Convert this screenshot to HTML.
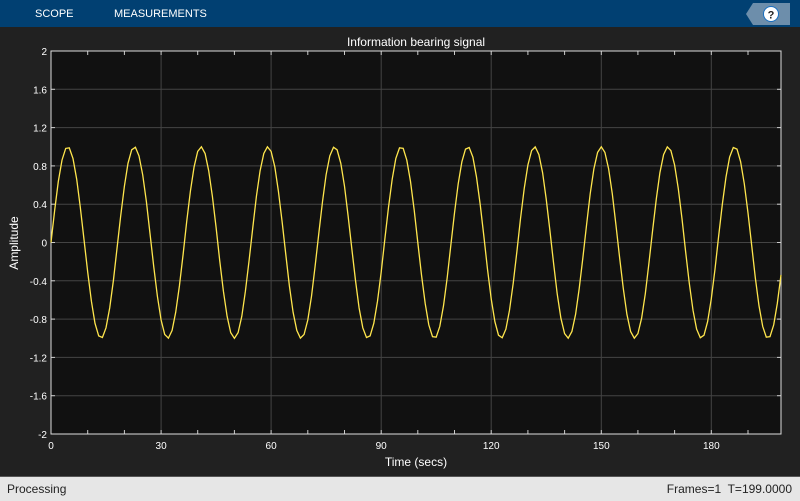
<!DOCTYPE html>
<html><head><meta charset="utf-8"><style>
*{margin:0;padding:0}
body{width:800px;height:500px;overflow:hidden;background:#212121;font-family:"Liberation Sans",Arial,sans-serif;position:relative}
#tb{position:absolute;left:0;top:0;width:800px;height:27px;background:#014072}
#tb span{position:absolute;top:8px;color:#fff;font-size:11px}
#st{position:absolute;left:0;top:476px;width:800px;height:24px;background:#e6e6e6;border-top:1px solid #555;font-size:12px;color:#222}
</style></head><body>
<div id="tb"><span style="left:35px">SCOPE</span><span style="left:114px">MEASUREMENTS</span>
<svg style="position:absolute;left:746px;top:3px" width="45" height="22"><polygon points="7,0 44,0 44,22 7,22 0,11" fill="#6d8eab"/><circle cx="25" cy="11" r="7.5" fill="#fff" stroke="#1a6fc0" stroke-width="1"/><text x="25" y="15.5" text-anchor="middle" font-size="11" font-weight="bold" fill="#222" font-family="Liberation Sans">?</text></svg>
</div>
<svg id="p" style="position:absolute;left:0;top:0" width="800" height="500"></svg>
<div id="st"><span style="position:absolute;left:7px;top:5px">Processing</span><span style="position:absolute;right:8px;top:5px">Frames=1&nbsp; T=199.0000</span></div>
<script>
var s='',L=51,R=781,T=51,B=434;
s+='<rect x="'+L+'" y="'+T+'" width="'+(R-L)+'" height="'+(B-T)+'" fill="#111"/>';
function X(t){return L+(t/199)*(R-L)}
function Y(v){return T+(2-v)/4*(B-T)}
for(var v=-2;v<=2.001;v+=0.4){var y=Y(v).toFixed(1);if(v>-1.9&&v<1.9)s+='<line x1="'+L+'" x2="'+R+'" y1="'+y+'" y2="'+y+'" stroke="#444" stroke-width="1"/>';
var lab=Math.round(v*10)/10;s+='<text x="'+(L-4)+'" y="'+(+y+4)+'" text-anchor="end" font-size="10" fill="#fff">'+(lab==0?'0':lab)+'</text>';
s+='<line x1="'+L+'" x2="'+(L+4)+'" y1="'+y+'" y2="'+y+'" stroke="#ccc"/><line x1="'+R+'" x2="'+(R-4)+'" y1="'+y+'" y2="'+y+'" stroke="#ccc"/>';}
for(var t=0;t<=199;t+=10){var x=X(t).toFixed(1);if(t%30==0){if(t>0)s+='<line x1="'+x+'" x2="'+x+'" y1="'+T+'" y2="'+B+'" stroke="#444"/>';s+='<text x="'+x+'" y="'+(B+15)+'" text-anchor="middle" font-size="10" fill="#fff">'+t+'</text>';}
s+='<line x1="'+x+'" x2="'+x+'" y1="'+T+'" y2="'+(T+4)+'" stroke="#ccc"/><line x1="'+x+'" x2="'+x+'" y1="'+B+'" y2="'+(B-4)+'" stroke="#ccc"/>';}
s+='<rect x="'+L+'" y="'+T+'" width="'+(R-L)+'" height="'+(B-T)+'" fill="none" stroke="#ddd" stroke-width="1"/>';
var pts=[];for(var t=0;t<=199;t++)pts.push(X(t).toFixed(1)+','+Y(Math.sin(2*Math.PI*0.055*t)).toFixed(1));
s+='<polyline points="'+pts.join(' ')+'" fill="none" stroke="#ffe64d" stroke-width="1.3"/>';
s+='<text x="416" y="46" text-anchor="middle" font-size="12" fill="#fff">Information bearing signal</text>';
s+='<text x="416" y="466" text-anchor="middle" font-size="12" fill="#fff">Time (secs)</text>';
s+='<text transform="translate(18,243) rotate(-90)" text-anchor="middle" font-size="12" fill="#fff">Amplitude</text>';
document.getElementById('p').innerHTML=s;
</script>
</body></html>
